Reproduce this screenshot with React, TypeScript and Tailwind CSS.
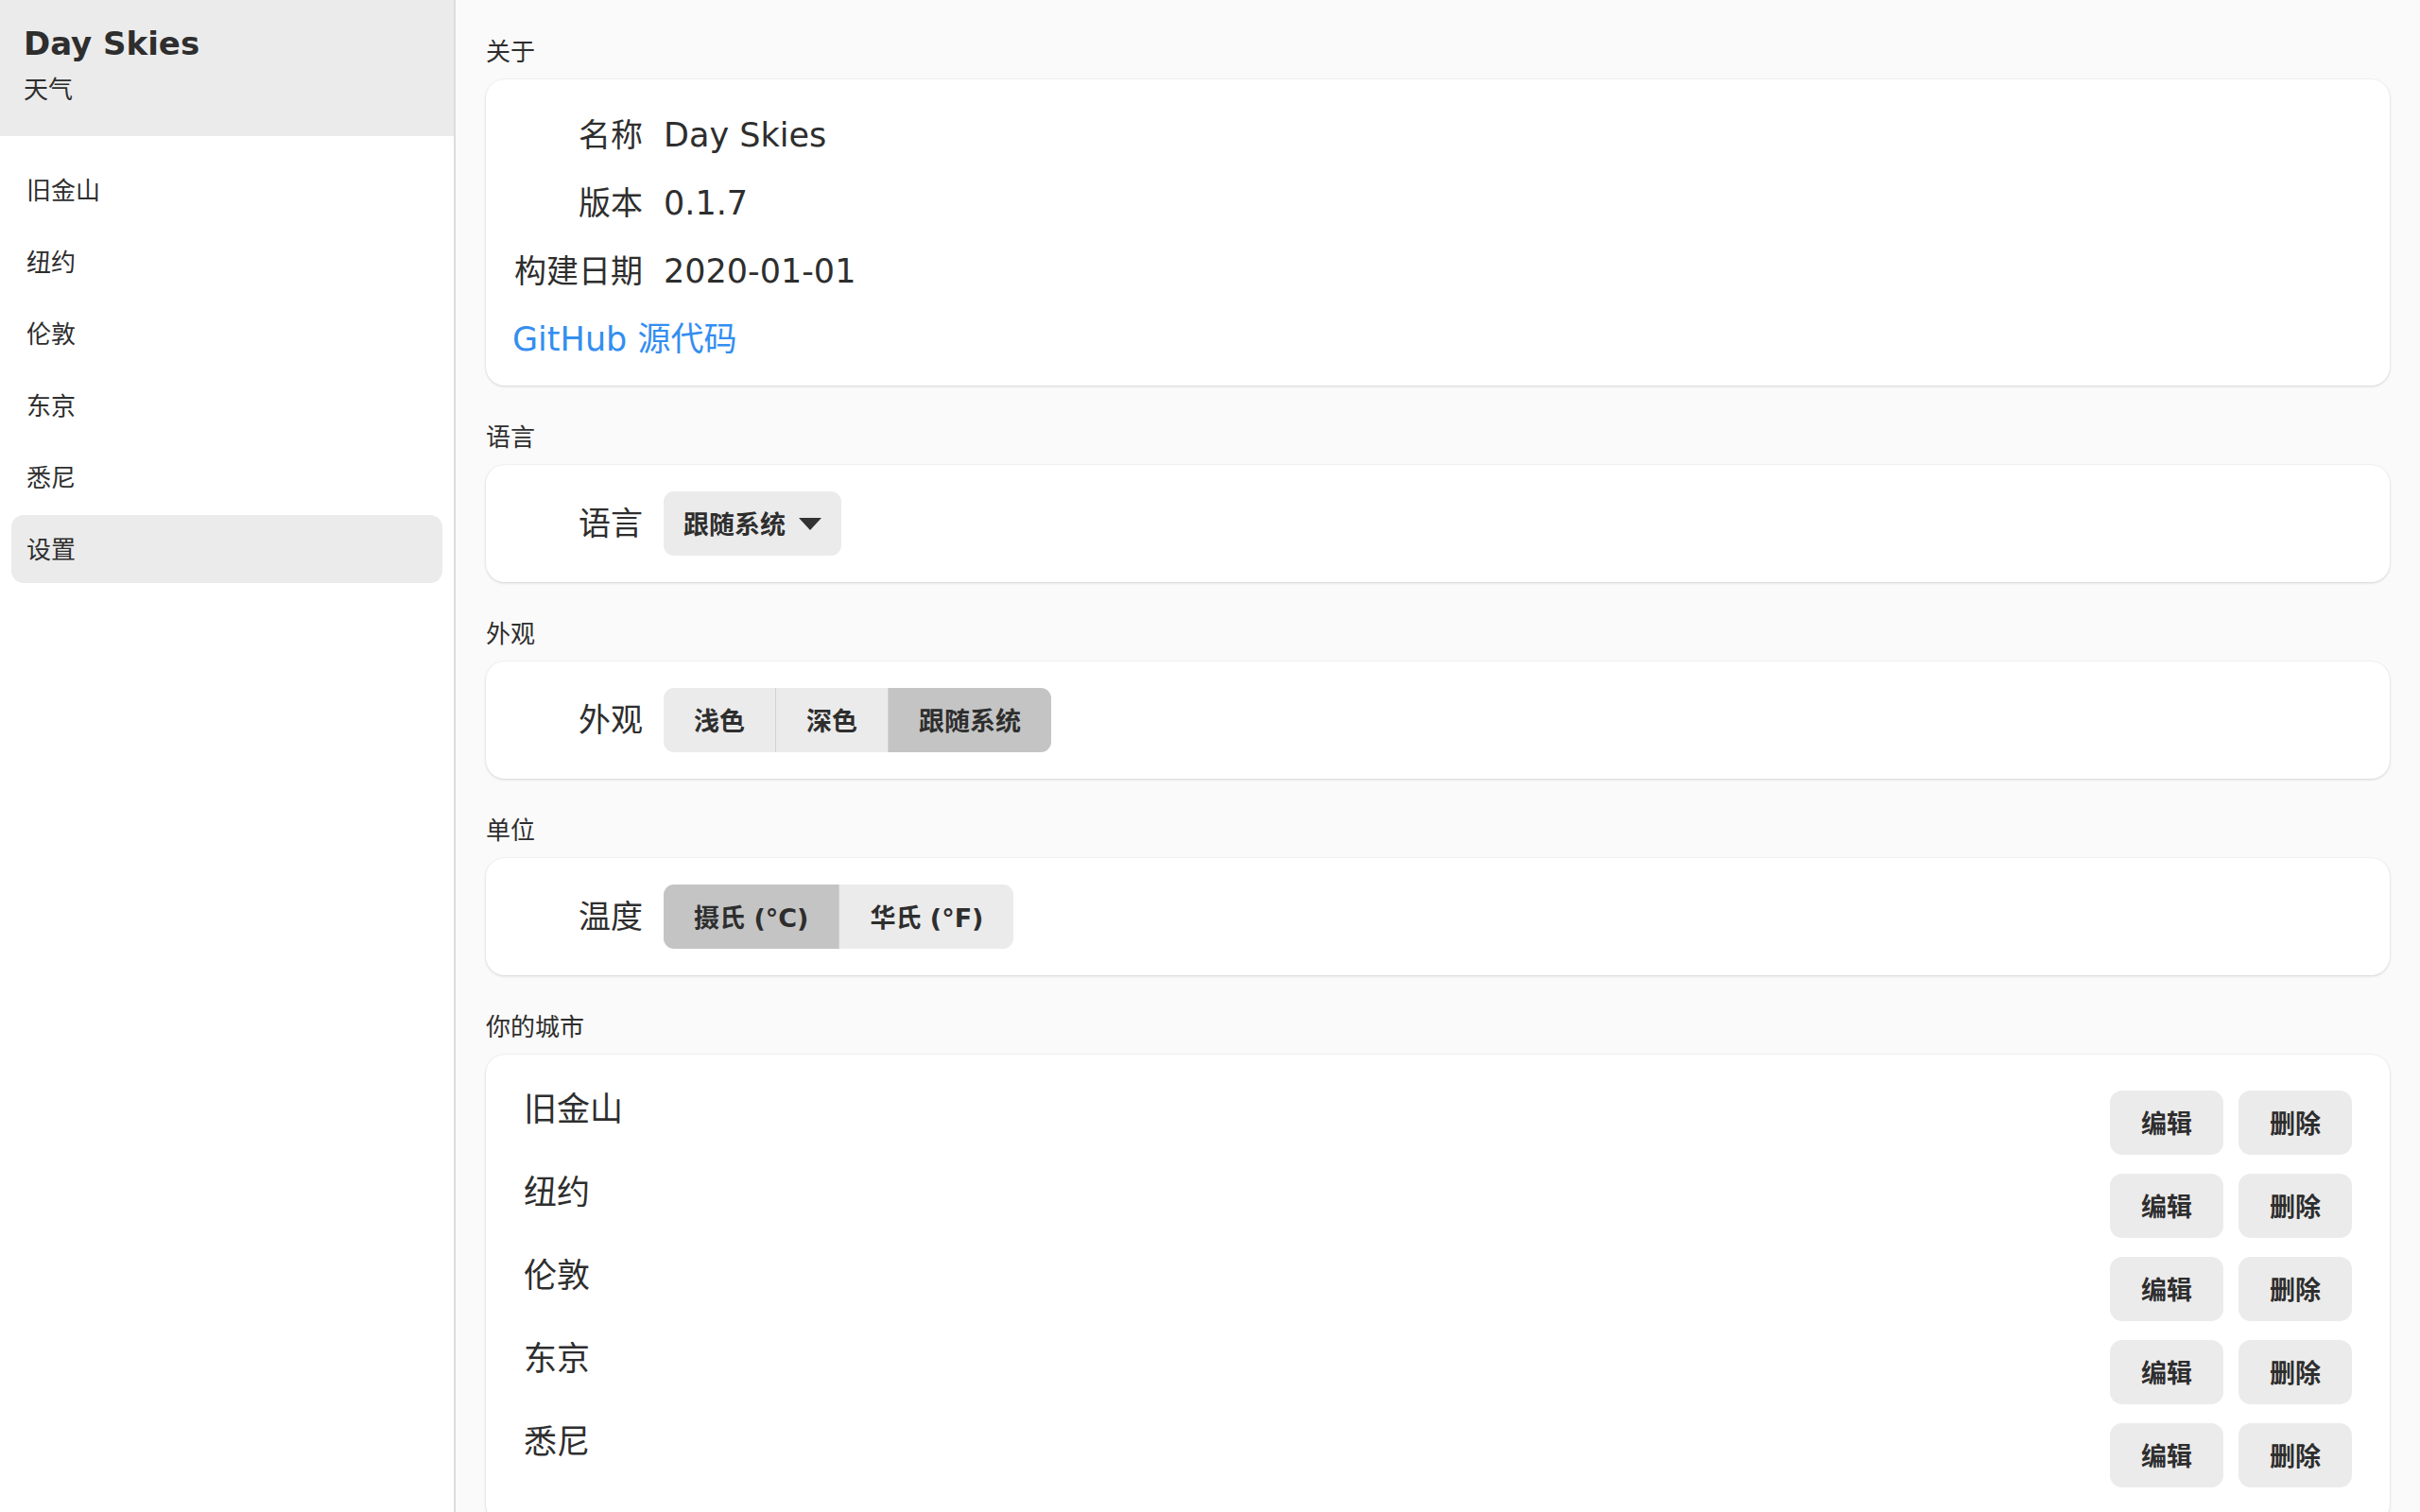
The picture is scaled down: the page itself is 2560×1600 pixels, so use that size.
import { useState } from 'react'

const cities = ['旧金山', '纽约', '伦敦', '东京', '悉尼']

function Segmented({ options, value, onChange }: { options: string[]; value: string; onChange: (v: string) => void }) {
  return (
    <div className="flex h-[68px] overflow-hidden rounded-[11px]">
      {options.map((opt, i) => (
        <button
          key={opt}
          onClick={() => onChange(opt)}
          className={`h-full px-8 pt-[4px] text-[27px] font-bold text-[#2e2e2e] ${
            value === opt ? 'bg-[#c4c4c4]' : 'bg-[#ebebeb]'
          } ${i > 0 ? 'border-l border-[#d2d2d2]' : ''}`}
        >
          {opt}
        </button>
      ))}
    </div>
  )
}

function Section({ title, children }: { title: string; children: React.ReactNode }) {
  return (
    <section className="mt-9 first:mt-0">
      <h2 className="mb-3 h-9 pt-[1px] text-[26px] leading-9 text-[#2e2e2e]">{title}</h2>
      <div className="rounded-[20px] bg-white shadow-[0_1px_3px_rgba(0,0,0,0.14),0_0_0_1px_rgba(0,0,0,0.025)]">
        {children}
      </div>
    </section>
  )
}

function Row({ label, children }: { label: string; children: React.ReactNode }) {
  return (
    <div className="flex items-center gap-5">
      <div className="w-[140px] shrink-0 pr-[2px] text-right text-[34px] text-[#2e2e2e]">{label}</div>
      {children}
    </div>
  )
}

export default function App() {
  const [theme, setTheme] = useState('跟随系统')
  const [unit, setUnit] = useState('摄氏 (°C)')
  const [active, setActive] = useState('设置')

  return (
    <div className="flex h-screen overflow-hidden bg-[#fafafa] font-['DejaVu_Sans','Noto_Sans_CJK_SC',sans-serif] text-[#2e2e2e]">
      <aside className="flex w-[482px] shrink-0 flex-col border-r-2 border-[#dcdcdc] bg-white">
        <div className="h-[144px] bg-[#ebebeb] px-[25px] pt-[26px]">
          <div className="text-[34px] leading-[40px] font-bold">Day Skies</div>
          <div className="mt-[14px] text-[26px] leading-[30px]">天气</div>
        </div>
        <nav className="flex flex-col gap-[4px] px-3 pt-[21px]">
          {[...cities, '设置'].map((c) => (
            <button
              key={c}
              onClick={() => setActive(c)}
              className={`flex h-[72px] items-center rounded-[13px] px-4 pt-[3px] text-left text-[26px] ${
                active === c ? 'bg-[#ebebeb]' : ''
              }`}
            >
              {c}
            </button>
          ))}
        </nav>
      </aside>

      <main className="flex-1 overflow-y-auto px-8 pt-9 pb-10">
        <Section title="关于">
          <div className="flex flex-col px-7 pt-[23px] pb-[13px]">
            <div className="h-[72px] leading-[72px]">
              <Row label="名称">
                <span className="text-[35px]">Day Skies</span>
              </Row>
            </div>
            <div className="h-[72px] leading-[72px]">
              <Row label="版本">
                <span className="text-[35px]">0.1.7</span>
              </Row>
            </div>
            <div className="h-[72px] leading-[72px]">
              <Row label="构建日期">
                <span className="text-[35px]">2020-01-01</span>
              </Row>
            </div>
            <div className="h-[72px] leading-[72px]">
              <a href="#" className="text-[35px] text-[#338ef0]">
                GitHub 源代码
              </a>
            </div>
          </div>
        </Section>

        <Section title="语言">
          <div className="px-7 py-7">
            <Row label="语言">
              <button className="flex h-[68px] items-center gap-[14px] rounded-[11px] bg-[#ebebeb] pt-[4px] pr-[21px] pl-[21px] text-[27px] font-bold">
                跟随系统
                <svg width="24" height="13" viewBox="0 0 24 13" className="-mt-[4px]">
                  <polygon points="0,0 24,0 12,13" fill="#333" />
                </svg>
              </button>
            </Row>
          </div>
        </Section>

        <Section title="外观">
          <div className="px-7 py-7">
            <Row label="外观">
              <Segmented options={['浅色', '深色', '跟随系统']} value={theme} onChange={setTheme} />
            </Row>
          </div>
        </Section>

        <Section title="单位">
          <div className="px-7 py-7">
            <Row label="温度">
              <Segmented options={['摄氏 (°C)', '华氏 (°F)']} value={unit} onChange={setUnit} />
            </Row>
          </div>
        </Section>

        <Section title="你的城市">
          <div className="flex flex-col py-7">
            {cities.map((c) => (
              <div key={c} className="flex items-start justify-between px-10 py-[10px]">
                <span className="text-[35px] leading-[40px]">{c}</span>
                <div className="flex gap-4">
                  <button className="h-[68px] w-[120px] rounded-[13px] bg-[#ebebeb] pt-[4px] text-[27px] font-bold">编辑</button>
                  <button className="h-[68px] w-[120px] rounded-[13px] bg-[#ebebeb] pt-[4px] text-[27px] font-bold">删除</button>
                </div>
              </div>
            ))}
          </div>
        </Section>
      </main>
    </div>
  )
}
